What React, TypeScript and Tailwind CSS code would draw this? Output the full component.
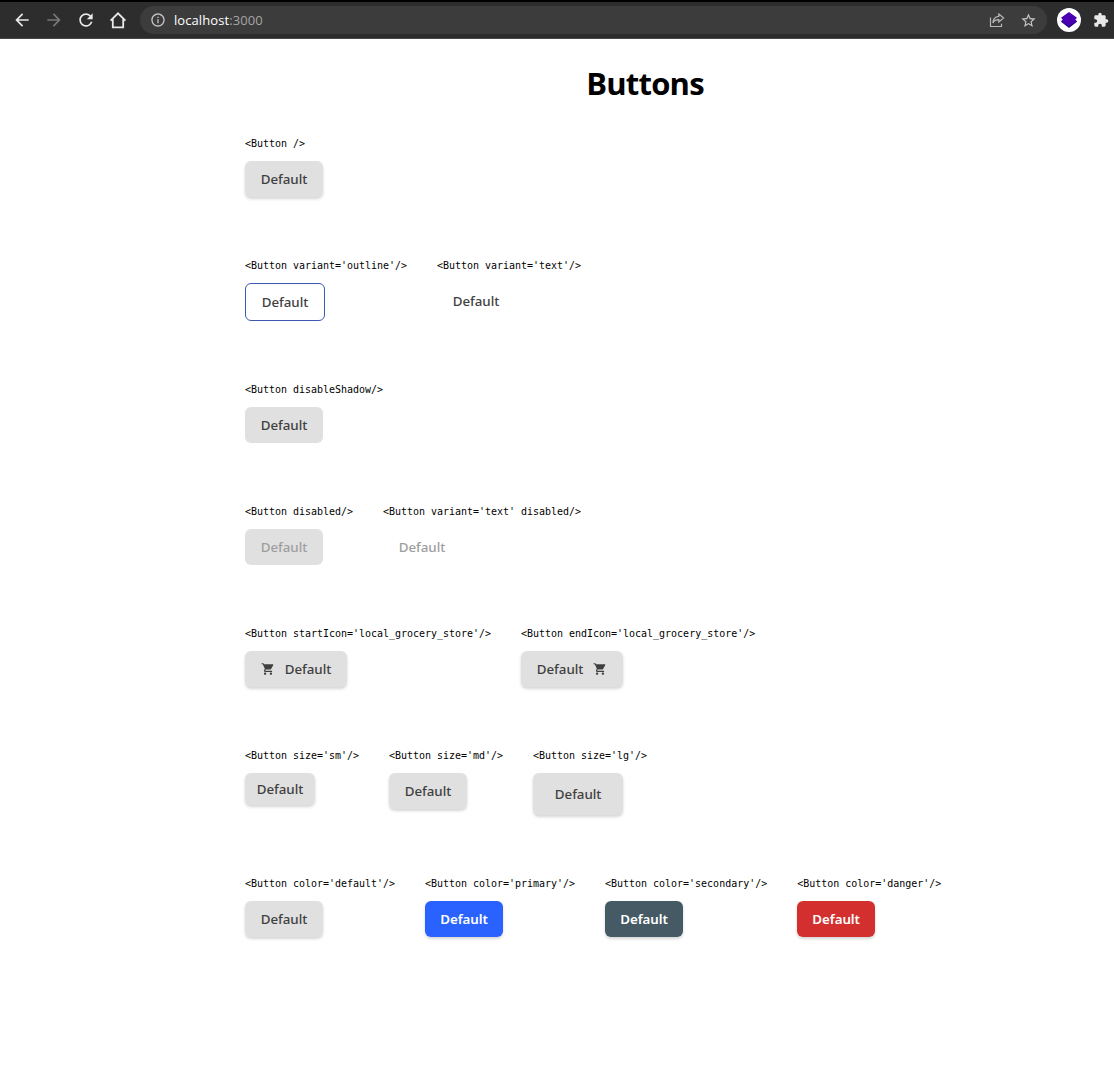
import React from "react";
import { MdArrowBack, MdArrowForward, MdRefresh, MdOutlineInfo, MdStarBorder, MdExtension, MdLocalGroceryStore } from "react-icons/md";

const tones = {
  default: "bg-[#e0e0e0] text-[#3f3f3f]",
  primary: "bg-[#2962ff] text-white font-semibold",
  secondary: "bg-[#455a64] text-white font-semibold",
  danger: "bg-[#d32f2f] text-white font-semibold",
  outline: "border border-[#3d5aaf] bg-white text-[#3f3f3f]",
  text: "text-[#3f3f3f]",
  disabled: "bg-[#e0e0e0] text-[#9e9e9e]",
  textDisabled: "text-[#9e9e9e]",
};

const sizes = {
  sm: "h-8 w-[70px]",
  md: "h-9 w-[78px]",
  lg: "h-[42px] w-[90px]",
  outline: "h-[38px] w-20",
  icon: "h-9 w-[102px] gap-2.5",
};

type Item = {
  code: string;
  tone?: keyof typeof tones;
  size?: keyof typeof sizes;
  flat?: boolean;
  icon?: "start" | "end";
};

const rows: Item[][] = [
  [{ code: "<Button />" }],
  [
    { code: "<Button variant='outline'/>", tone: "outline", size: "outline", flat: true },
    { code: "<Button variant='text'/>", tone: "text", flat: true },
  ],
  [{ code: "<Button disableShadow/>", flat: true }],
  [
    { code: "<Button disabled/>", tone: "disabled", flat: true },
    { code: "<Button variant='text' disabled/>", tone: "textDisabled", flat: true },
  ],
  [
    { code: "<Button startIcon='local_grocery_store'/>", size: "icon", icon: "start" },
    { code: "<Button endIcon='local_grocery_store'/>", size: "icon", icon: "end" },
  ],
  [
    { code: "<Button size='sm'/>", size: "sm" },
    { code: "<Button size='md'/>" },
    { code: "<Button size='lg'/>", size: "lg" },
  ],
  [
    { code: "<Button color='default'/>" },
    { code: "<Button color='primary'/>", tone: "primary" },
    { code: "<Button color='secondary'/>", tone: "secondary" },
    { code: "<Button color='danger'/>", tone: "danger" },
  ],
];

function Demo({ code, tone = "default", size = "md", flat, icon }: Item) {
  return (
    <div className="flex flex-col items-start gap-2.5">
      <code className="h-[15px] whitespace-pre font-['DejaVu_Sans_Mono',monospace] text-[9.97px] leading-[15px] text-black">{code}</code>
      <button
        className={`flex items-center justify-center rounded-md text-[13.333px] font-medium leading-[18px] ${tones[tone]} ${sizes[size]} ${flat ? "" : "shadow-[0_2px_3px_rgba(51,51,51,0.2)]"}`}
      >
        {icon === "start" && <MdLocalGroceryStore className="size-3.5" />}
        <span className="tracking-[-0.05px]">Default</span>
        {icon === "end" && <MdLocalGroceryStore className="size-3.5" />}
      </button>
    </div>
  );
}

function BrowserBar() {
  return (
    <header className="flex h-[39px] items-center border-b border-[#484848] border-t-2 border-t-black bg-[#2d2d2d] pl-3 font-['Open_Sans',sans-serif] text-[#e8e8e8]">
      <div className="flex w-32 items-center gap-3">
        <MdArrowBack className="size-5" />
        <MdArrowForward className="size-5 text-[#777]" />
        <MdRefresh className="size-5" />
        <svg viewBox="0 0 20 20" className="size-5" fill="none" stroke="currentColor" strokeWidth="1.8">
          <path d="M2.6 10.7 10 3.3l7.4 7.4M4.8 9v8.3h10.4V9" />
        </svg>
      </div>
      <div className="flex h-7 w-[907px] items-center rounded-full bg-[#3c3c3c] pl-2.5 pr-2.5">
        <MdOutlineInfo className="size-4 text-[#c4c4c4]" />
        <span className="ml-2 text-[13px] leading-none tracking-[0.08px] text-white">
          localhost<span className="text-[#a5a5a5]">:3000</span>
        </span>
        <svg viewBox="0 0 16 16" className="ml-auto size-4" fill="none" stroke="#b8b8b8" strokeWidth="1.2">
          <path d="M1.5 5.5v9h11v-2.7M9.8 2l4.8 4-4.8 4V7.7C7 7.6 5 8.5 3.9 11c.1-3.8 2.2-6.3 5.9-6.7Z" />
        </svg>
        <MdStarBorder className="ml-[15px] size-[17px] text-[#c8c8c8]" />
      </div>
      <div className="ml-2.5 flex size-6 shrink-0 items-center justify-center rounded-full bg-white">
        <svg viewBox="0 0 16 16" className="size-4">
          <path d="M0 9.8 2 8h12l2 1.800L8 16Z" fill="#25008a" />
          <path d="M8 0 16 5.800 14.300 7.600 16 9.300 8 14 0 9.300 1.700 7.600 0 5.800Z" fill="#4a00b0" />
        </svg>
      </div>
      <MdExtension className="ml-3 size-4 shrink-0" />
    </header>
  );
}

export default function App() {
  return (
    <div className="h-[1069px] overflow-hidden bg-white font-['Noto_Sans',sans-serif]">
      <BrowserBar />
      <main className="ml-44 pl-[69px] pt-[23px]">
        <h1 className="-ml-[69px] h-[74px] text-center font-['Open_Sans',sans-serif] text-[31px] font-bold leading-[42px] tracking-[-0.8px] text-black">Buttons</h1>
        <div className="flex flex-col gap-[61px]">
          {rows.map((row, i) => (
            <section key={i} className="flex items-start gap-[30px]">
              {row.map((item) => (
                <Demo key={item.code} {...item} />
              ))}
            </section>
          ))}
        </div>
      </main>
    </div>
  );
}
